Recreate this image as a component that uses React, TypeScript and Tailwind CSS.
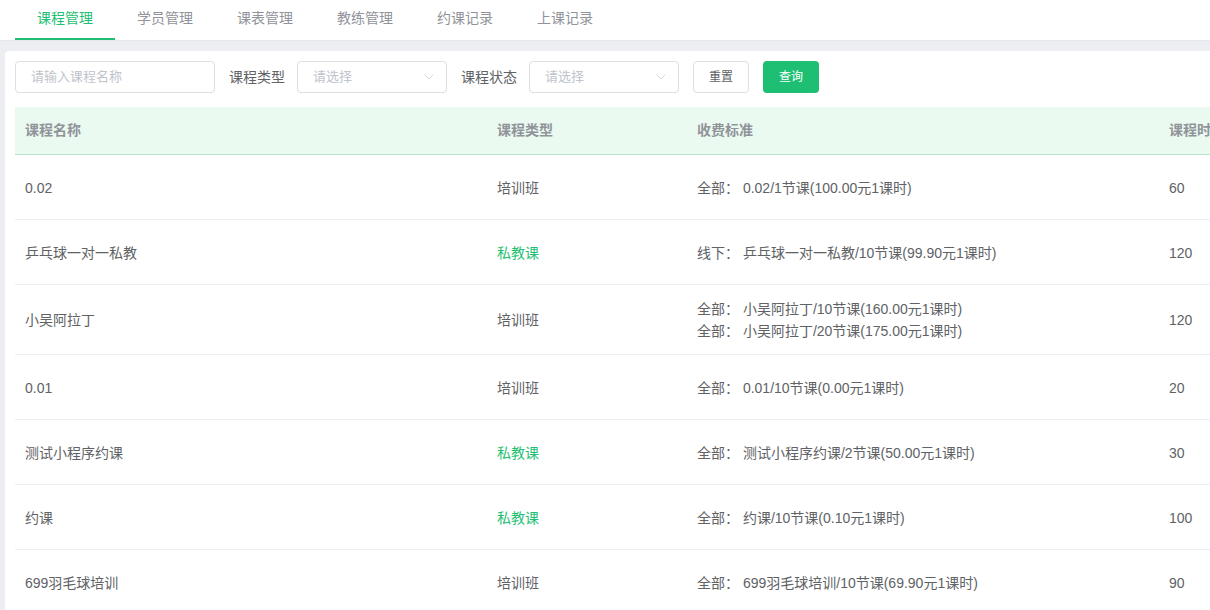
import { ChevronDown } from 'lucide-react';

const tabs = ['课程管理', '学员管理', '课表管理', '教练管理', '约课记录', '上课记录'];

interface Course {
  name: string;
  type: string;
  fees: string[];
  minutes: string;
}

const courses: Course[] = [
  { name: '0.02', type: '培训班', fees: ['全部： 0.02/1节课(100.00元1课时)'], minutes: '60' },
  { name: '乒乓球一对一私教', type: '私教课', fees: ['线下： 乒乓球一对一私教/10节课(99.90元1课时)'], minutes: '120' },
  {
    name: '小吴阿拉丁',
    type: '培训班',
    fees: ['全部： 小吴阿拉丁/10节课(160.00元1课时)', '全部： 小吴阿拉丁/20节课(175.00元1课时)'],
    minutes: '120',
  },
  { name: '0.01', type: '培训班', fees: ['全部： 0.01/10节课(0.00元1课时)'], minutes: '20' },
  { name: '测试小程序约课', type: '私教课', fees: ['全部： 测试小程序约课/2节课(50.00元1课时)'], minutes: '30' },
  { name: '约课', type: '私教课', fees: ['全部： 约课/10节课(0.10元1课时)'], minutes: '100' },
  { name: '699羽毛球培训', type: '培训班', fees: ['全部： 699羽毛球培训/10节课(69.90元1课时)'], minutes: '90' },
];

const cols = 'grid grid-cols-[472px_200px_472px_200px]';

function Select({ width }: { width: string }) {
  return (
    <div className={`flex h-8 ${width} items-center justify-between rounded border border-[#dcdfe6] bg-white pl-[15px] pr-[9px] text-[13px] text-[#c0c4cc]`}>
      <span>请选择</span>
      <ChevronDown className="h-4 w-4 text-[#c0c4cc]" strokeWidth={1} />
    </div>
  );
}

export default function App() {
  return (
    <div
      className="h-[610px] w-[1210px] overflow-hidden bg-[#eceef2]"
      style={{ fontFamily: '"Liberation Sans", "Noto Sans CJK SC", sans-serif' }}
    >
      {/* Tabs */}
      <div className="flex h-[41px] border-b border-[#e4e7ed] bg-white pl-[15px]">
        {tabs.map((t, i) => (
          <div
            key={t}
            className={`flex h-10 w-[100px] items-center justify-center text-[14px] ${
              i === 0 ? 'border-b-2 border-[#1ebf73] pb-[2px] text-[#1ebf73]' : 'pb-[4px] text-[#909399]'
            }`}
          >
            {t}
          </div>
        ))}
      </div>

      {/* Card */}
      <div className="ml-[5px] mt-[10px] w-[1400px] rounded-tl bg-white px-[10px] pt-[10px]">
        {/* Filters */}
        <div className="flex items-center">
          <div className="flex h-8 w-[200px] items-center rounded border border-[#dcdfe6] pl-[15px] text-[13px] text-[#c0c4cc]">
            请输入课程名称
          </div>
          <span className="ml-[14px] mr-3 text-[14px] text-[#606266]">课程类型</span>
          <Select width="w-[150px]" />
          <span className="ml-[14px] mr-3 text-[14px] text-[#606266]">课程状态</span>
          <Select width="w-[150px]" />
          <button type="button" className="ml-[14px] h-8 w-[56px] rounded border border-[#dcdfe6] bg-white text-[12px] text-[#606266]">
            重置
          </button>
          <button type="button" className="ml-[14px] h-8 w-[56px] rounded bg-[#1ebf73] text-[12px] text-white">
            查询
          </button>
        </div>

        {/* Table */}
        <div className="mt-[14px] overflow-hidden">
          <div className={`${cols} h-12 items-center border-b border-[#b3e6c6] bg-[#eafaf0] text-[14px] font-semibold text-[#909399]`}>
            <div className="pl-[10px]">课程名称</div>
            <div className="pl-[10px]">课程类型</div>
            <div className="pl-[10px]">收费标准</div>
            <div className="whitespace-nowrap pl-[10px]">课程时长(分钟)</div>
          </div>
          {courses.map((c) => (
            <div key={c.name} className={`${cols} min-h-[65px] items-center border-b border-[#ebeef5] pt-[13px] pb-[12px] text-[14px] leading-[22px] text-[#606266]`}>
              <div className="pl-[10px]">{c.name}</div>
              <div className={`pl-[10px] ${c.type === '私教课' ? 'text-[#1ebf73]' : ''}`}>{c.type}</div>
              <div className="pl-[10px]">
                {c.fees.map((f) => (
                  <div key={f} className="whitespace-pre">{f}</div>
                ))}
              </div>
              <div className="pl-[10px]">{c.minutes}</div>
            </div>
          ))}
        </div>
      </div>
    </div>
  );
}
